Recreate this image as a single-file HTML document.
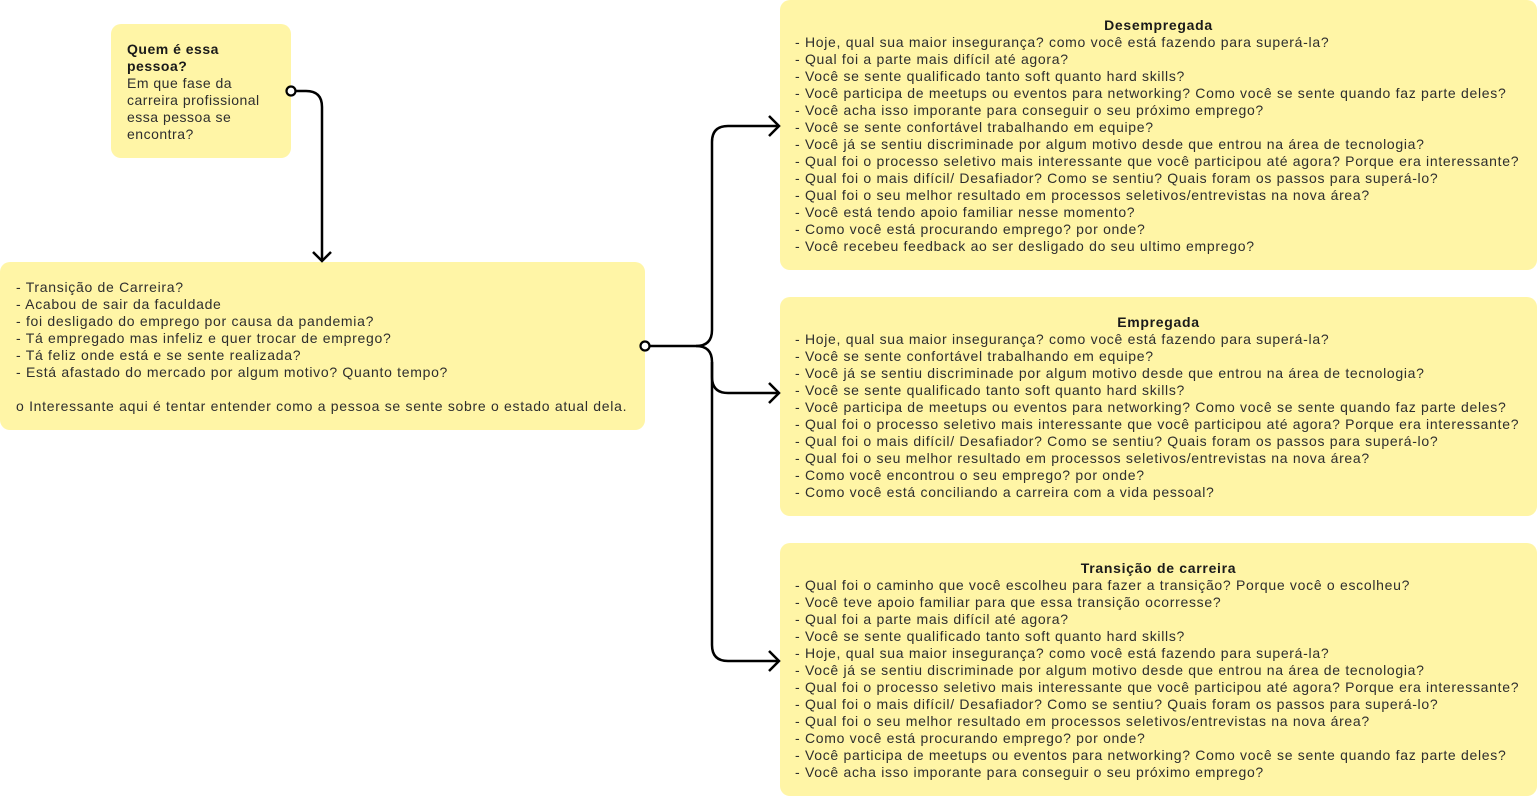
<!DOCTYPE html>
<html><head><meta charset="utf-8"><style>
body{margin:0;width:1537px;height:796px;background:#fff;position:relative;overflow:hidden;font-family:"Liberation Sans",sans-serif;color:#2e2e2e;font-size:14px;letter-spacing:0.7px}
.b{position:absolute;background:#fff5a6;border-radius:10px;box-sizing:border-box}
.t{position:absolute;white-space:pre;line-height:17px}
b{color:#1a1a1a}
</style></head><body>
<div class="b" style="left:111px;top:24px;width:180px;height:134px"></div>
<div class="t" style="left:127px;top:41px;letter-spacing:0.5px"><b>Quem é essa
pessoa?</b>
Em que fase da
carreira profissional
essa pessoa se
encontra?</div>

<div class="b" style="left:0;top:262px;width:645px;height:168px"></div>
<div class="t" style="left:16px;top:279px">- Transição de Carreira?
- Acabou de sair da faculdade
- foi desligado do emprego por causa da pandemia?
- Tá empregado mas infeliz e quer trocar de emprego?
- Tá feliz onde está e se sente realizada?
- Está afastado do mercado por algum motivo? Quanto tempo?

o Interessante aqui é tentar entender como a pessoa se sente sobre o estado atual dela.</div>

<div class="b" style="left:780px;top:0;width:757px;height:270px"></div>
<div class="t" style="left:780px;width:757px;text-align:center;top:17px"><b>Desempregada</b></div>
<div class="t" style="left:795px;top:34px">- Hoje, qual sua maior insegurança? como você está fazendo para superá-la?
- Qual foi a parte mais difícil até agora?
- Você se sente qualificado tanto soft quanto hard skills?
- Você participa de meetups ou eventos para networking? Como você se sente quando faz parte deles?
- Você acha isso imporante para conseguir o seu próximo emprego?
- Você se sente confortável trabalhando em equipe?
- Você já se sentiu discriminade por algum motivo desde que entrou na área de tecnologia?
- Qual foi o processo seletivo mais interessante que você participou até agora? Porque era interessante?
- Qual foi o mais difícil/ Desafiador? Como se sentiu? Quais foram os passos para superá-lo?
- Qual foi o seu melhor resultado em processos seletivos/entrevistas na nova área?
- Você está tendo apoio familiar nesse momento?
- Como você está procurando emprego? por onde?
- Você recebeu feedback ao ser desligado do seu ultimo emprego?</div>

<div class="b" style="left:780px;top:297px;width:757px;height:219px"></div>
<div class="t" style="left:780px;width:757px;text-align:center;top:314px"><b>Empregada</b></div>
<div class="t" style="left:795px;top:331px">- Hoje, qual sua maior insegurança? como você está fazendo para superá-la?
- Você se sente confortável trabalhando em equipe?
- Você já se sentiu discriminade por algum motivo desde que entrou na área de tecnologia?
- Você se sente qualificado tanto soft quanto hard skills?
- Você participa de meetups ou eventos para networking? Como você se sente quando faz parte deles?
- Qual foi o processo seletivo mais interessante que você participou até agora? Porque era interessante?
- Qual foi o mais difícil/ Desafiador? Como se sentiu? Quais foram os passos para superá-lo?
- Qual foi o seu melhor resultado em processos seletivos/entrevistas na nova área?
- Como você encontrou o seu emprego? por onde?
- Como você está conciliando a carreira com a vida pessoal?</div>

<div class="b" style="left:780px;top:543px;width:757px;height:253px"></div>
<div class="t" style="left:780px;width:757px;text-align:center;top:560px"><b>Transição de carreira</b></div>
<div class="t" style="left:795px;top:577px">- Qual foi o caminho que você escolheu para fazer a transição? Porque você o escolheu?
- Você teve apoio familiar para que essa transição ocorresse?
- Qual foi a parte mais difícil até agora?
- Você se sente qualificado tanto soft quanto hard skills?
- Hoje, qual sua maior insegurança? como você está fazendo para superá-la?
- Você já se sentiu discriminade por algum motivo desde que entrou na área de tecnologia?
- Qual foi o processo seletivo mais interessante que você participou até agora? Porque era interessante?
- Qual foi o mais difícil/ Desafiador? Como se sentiu? Quais foram os passos para superá-lo?
- Qual foi o seu melhor resultado em processos seletivos/entrevistas na nova área?
- Como você está procurando emprego? por onde?
- Você participa de meetups ou eventos para networking? Como você se sente quando faz parte deles?
- Você acha isso imporante para conseguir o seu próximo emprego?</div>

<svg width="1537" height="796" style="position:absolute;left:0;top:0" fill="none" stroke="#000" stroke-width="2.5">
<path d="M296 91 H306 Q322 91 322 107 V261"/>
<path d="M313 252 L322 261 L331 252"/>
<circle cx="291" cy="91" r="4.5" fill="#fff" stroke-width="2.2"/>
<path d="M650 346 H696 Q712 346 712 330 V142 Q712 126 728 126 H779"/>
<path d="M696 346 Q712 346 712 362 V377 Q712 393 728 393 H779"/>
<path d="M712 362 V645 Q712 661 728 661 H779"/>
<path d="M769 116 L779 126 L769 136 M769 383 L779 393 L769 403 M769 651 L779 661 L769 671"/>
<circle cx="645" cy="346" r="4.5" fill="#fff" stroke-width="2.2"/>
</svg>
</body></html>
